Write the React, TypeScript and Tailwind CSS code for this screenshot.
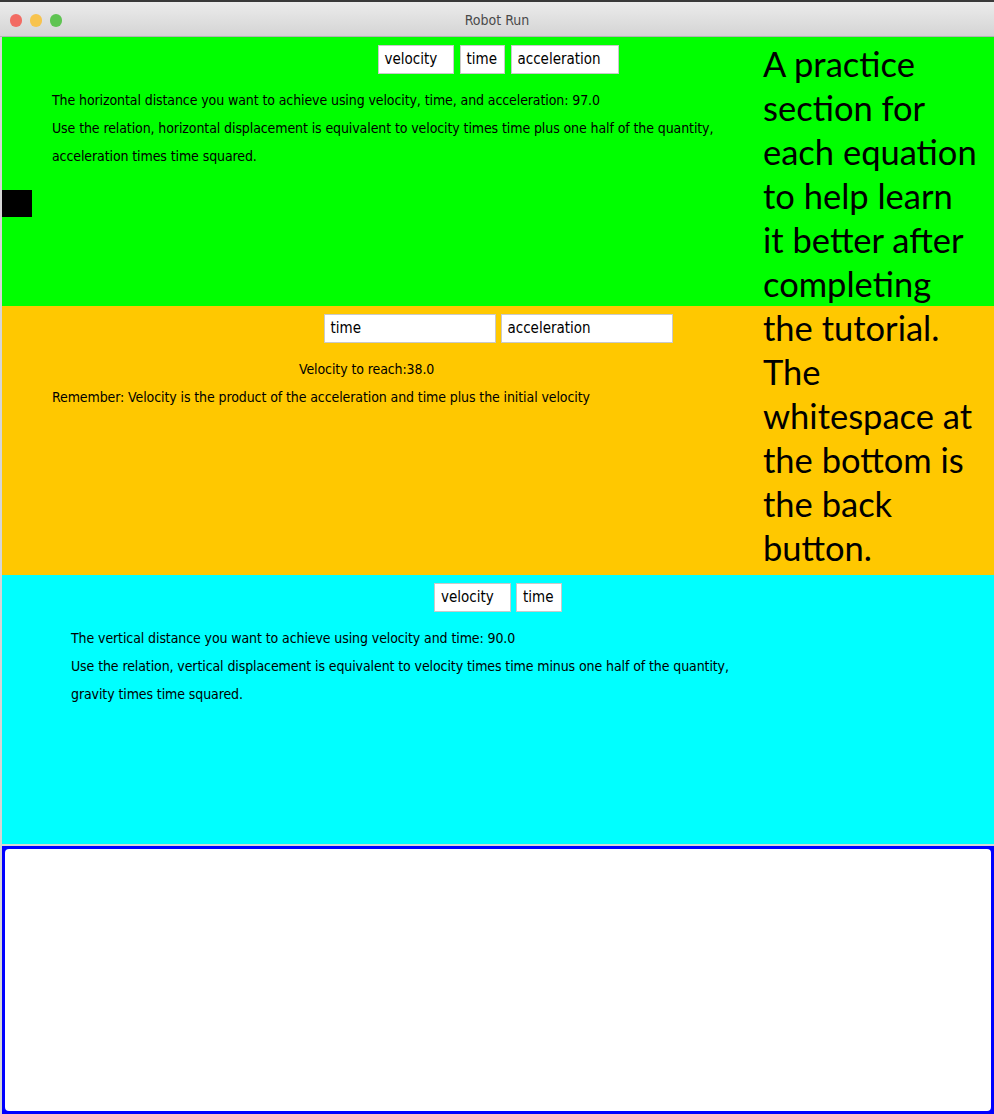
import React from "react";

const small = { fontFamily: '"DejaVu Sans Condensed", "Liberation Sans", sans-serif' };

function Field({ label, width }: { label: string; width: string }) {
  return (
    <div
      className={`${width} h-[29px] bg-white border border-[#c9c9c9] flex items-center px-[6px] text-[15px] text-black`}
      style={small}
    >
      {label}
    </div>
  );
}

export default function App() {
  return (
    <div className="w-[994px] h-[1114px] bg-[#d6d6d6] flex flex-col overflow-hidden relative">
      {/* title bar */}
      <div className="h-[37px] shrink-0 border-t-2 border-[#3a3a3a] border-b border-b-[#b2b2b2] bg-gradient-to-b from-[#ececec] to-[#d4d4d4] relative flex items-center justify-center">
        <div className="absolute left-[10px] top-[12px] flex gap-[8px]">
          <span className="w-[12px] h-[13px] rounded-full bg-[#f26b63]" />
          <span className="w-[12px] h-[13px] rounded-full bg-[#f7c34d]" />
          <span className="w-[12px] h-[13px] rounded-full bg-[#5fc452]" />
        </div>
        <span className="text-[14px] text-[#4a4a4a] mt-[3px]" style={small}>
          Robot Run
        </span>
      </div>

      <div className="flex-1 flex flex-col pl-[2px]">
        {/* green */}
        <div className="h-[269px] bg-[#00ff00] flex flex-col text-black" style={small}>
          <div className="flex justify-center gap-[6px] pt-[8px]">
            <Field label="velocity" width="w-[76px]" />
            <Field label="time" width="w-[45px]" />
            <Field label="acceleration" width="w-[108px]" />
          </div>
          <div className="pl-[50px] mt-[12px] text-[14px] tracking-[-0.1px] leading-[28px]">
            <p>The horizontal distance you want to achieve using velocity, time, and acceleration: 97.0</p>
            <p>Use the relation, horizontal displacement is equivalent to velocity times time plus one half of the quantity,</p>
            <p>acceleration times time squared.</p>
          </div>
          <div className="w-[30px] h-[27px] bg-black mt-[20px]" />
        </div>

        {/* orange */}
        <div className="h-[269px] bg-[#ffc800] flex flex-col text-black" style={small}>
          <div className="flex justify-center gap-[5px] pt-[8px]">
            <Field label="time" width="w-[172px]" />
            <Field label="acceleration" width="w-[172px]" />
          </div>
          <p className="pl-[297px] mt-[12px] text-[14px] tracking-[-0.1px] leading-[28px]">Velocity to reach:38.0</p>
          <p className="pl-[50px] text-[14px] tracking-[-0.1px] leading-[28px]">
            Remember: Velocity is the product of the acceleration and time plus the initial velocity
          </p>
        </div>

        {/* cyan */}
        <div className="h-[269px] bg-[#00ffff] flex flex-col text-black" style={small}>
          <div className="flex justify-center gap-[5px] pt-[8px]">
            <Field label="velocity" width="w-[77px]" />
            <Field label="time" width="w-[46px]" />
          </div>
          <div className="pl-[69px] mt-[12px] text-[14px] tracking-[-0.1px] leading-[28px]">
            <p>The vertical distance you want to achieve using velocity and time: 90.0</p>
            <p>Use the relation, vertical displacement is equivalent to velocity times time minus one half of the quantity,</p>
            <p>gravity times time squared.</p>
          </div>
        </div>

        {/* back button */}
        <div className="flex-1 mt-[2px] bg-[#0000ff] p-[3px]">
          <div className="w-full h-full bg-white rounded-[4px]" />
        </div>
      </div>

      {/* info label overlaying the panels */}
      <div
        className="absolute left-[763px] top-[42px] w-[216px] text-[34.5px] leading-[44px] text-black"
        style={{ fontFamily: 'Lato, "Open Sans", sans-serif' }}
      >
        A practice section for each equation to help learn it better after completing the tutorial. The whitespace at the bottom is the back button.
      </div>
    </div>
  );
}
